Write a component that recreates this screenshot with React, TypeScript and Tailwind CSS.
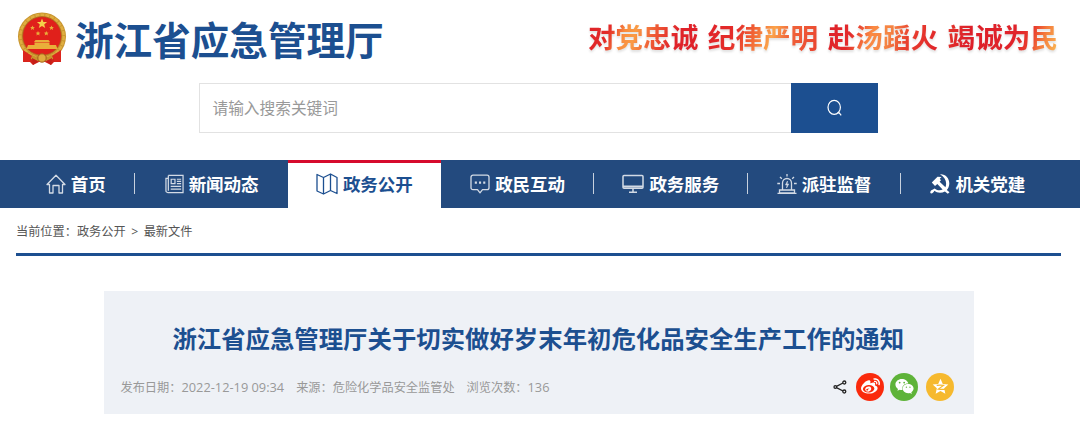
import React from "react";
import { FaWeibo, FaWeixin } from "react-icons/fa";

type IconProps = { className?: string };

function Emblem() {
  return (
    <svg viewBox="0 0 50 54" className="h-[54px] w-[50px] shrink-0">
      <path d="M7 38 L6 50 L13 50 L16 53 L22 50 L28 50 L34 53 L37 50 L44 50 L43 38Z" fill="#d3221a" />
      <circle cx="25" cy="24.500" r="24" fill="#c8952f" />
      <circle cx="25" cy="24.500" r="21.700" fill="none" stroke="#dfae40" strokeWidth="2.500" strokeDasharray="4 1" />
      <circle cx="25" cy="24" r="19.300" fill="#e0201b" stroke="#a9661b" strokeWidth="0.7" />
      <path d="M25 6.500l1.400 3.400 3.700.2-2.900 2.300 1 3.600-3.200-2-3.200 2 1-3.600-2.900-2.300 3.700-.2z" fill="#f4cf49" />
      <g fill="#e9ae3a">
        <path d="M15.500 13.500l.7 1.600 1.700.1-1.300 1.100.5 1.700-1.600-1-1.600 1 .5-1.700-1.300-1.100 1.700-.1z" />
        <path d="M34.500 13.500l.7 1.600 1.700.1-1.300 1.100.5 1.700-1.600-1-1.600 1 .5-1.700-1.300-1.100 1.700-.1z" />
        <path d="M21 19l.7 1.600 1.700.1-1.300 1.100.5 1.700-1.600-1-1.600 1 .5-1.700-1.300-1.100 1.700-.1z" />
        <path d="M29.300 19l.7 1.600 1.700.1-1.300 1.100.5 1.700-1.600-1-1.600 1 .5-1.700-1.300-1.100 1.700-.1z" />
        <path d="M18.500 28h13l1.500 2h-16zM17.500 30.500h15v2.500h-15zM11 33h28l1.500 4h-31z" />
      </g>
      <path d="M12 42q13 7 26 0l-2 5q-11 5-22 0z" fill="#c9942c" />
      <circle cx="25" cy="46" r="4.200" fill="#e0ac3f" stroke="#a4601b" strokeWidth="1" />
      <path d="M6 38l9 6-3 6-6-1zM44 38l-9 6 3 6 6-1z" fill="#dc251d" />
      <path d="M15 46l6 3-5 4zM35 46l-6 3 5 4z" fill="#c41f19" />
    </svg>
  );
}

function HomeIcon({ className }: IconProps) {
  return (
    <svg viewBox="0 0 20 20" className={className} fill="none" stroke="currentColor" strokeWidth="1.3" strokeLinejoin="round">
      <path d="M1 10.500L10 1.200l9 9.300h-2.500V19h-3.500v-7.500H7V19H3.500v-8.500z" />
    </svg>
  );
}

function NewsIcon({ className }: IconProps) {
  return (
    <svg viewBox="0 0 20 20" className={className} fill="none" stroke="currentColor" strokeWidth="1.3">
      <path d="M3.500 1H19v18H3c-1.400 0-2-1-2-2V4h2.500M3.500 1v16" />
      <path d="M6.500 5h4v4.500h-4zM12.500 5H17M12.500 7.200H17M12.500 9.500H17M6 12.500h11M6 15.500h11" />
    </svg>
  );
}

function MapIcon({ className }: IconProps) {
  return (
    <svg viewBox="0 0 22 22" className={className} fill="none" stroke="currentColor" strokeWidth="1.300" strokeLinejoin="round">
      <path d="M1 1.500l6.500 3L14.500 1 21 4.500V20.500l-6.500-3-7 3.500L1 18zM7.500 4.500V21M14.500 1v16.500" />
    </svg>
  );
}

function ChatIcon({ className }: IconProps) {
  return (
    <svg viewBox="0 0 20 20" className={className} fill="none" stroke="currentColor" strokeWidth="1.300" strokeLinejoin="round">
      <path d="M3 1.200h14a2 2 0 012 2v10.500a2 2 0 01-2 2h-4.500L10 18.800l-2.500-3.100H3a2 2 0 01-2-2V3.200a2 2 0 012-2z" />
      <path d="M4.800 8.700h2.100M9 8.700h2.100M13.200 8.700h2.100" strokeWidth="2.200" />
    </svg>
  );
}

function ScreenIcon({ className }: IconProps) {
  return (
    <svg viewBox="0 0 22 20" className={className} fill="none" stroke="currentColor" strokeWidth="1.500">
      <rect x="1" y="1.500" width="20" height="12.700" rx="1" />
      <path d="M1 12.500h20" strokeWidth="2" />
      <path d="M11 14.500v3.500M7 18.300h8" />
    </svg>
  );
}

function AlarmIcon({ className }: IconProps) {
  return (
    <svg viewBox="0 0 20 20" className={className} fill="none" stroke="currentColor" strokeWidth="1.300">
      <path d="M5.500 15.500V9a4.500 4.500 0 019 0v6.500M2.500 16h15v2.800h-15zM10 0v2.500M3 3l1.800 1.800M17 3l-1.800 1.800M.3 9.500h2.700M17 9.500h2.700M.5 19.300h19" />
      <path d="M10.500 7L8.500 11h1.700L9.500 14l2.200-4H10z" fill="currentColor" strokeWidth=".6" />
    </svg>
  );
}

function PartyIcon({ className }: IconProps) {
  return (
    <svg viewBox="0 0 20 20" className={className} fill="currentColor">
      <path d="M10 .3C15.500-.2 19.500 4.500 19.300 9.800c-.1 2.600-1 4.600-2.500 6.200l2.700 2.300-1.700 1.500-2.900-2.400C11.500 19.400 7 19 4.300 16.700c-.4 1.600-2.200 3.200-3.700 2.600-1-1.400.3-3.300 2.400-3.800l1.500-1.100c3 2.200 5.800 2.200 8.100 1L7.300 10 5 12 1.800 8.500 7.500 2.800 11.500 3 9.800 4.700l1.200 1.600-1.400 1.500 5.800 5.400C17.300 8.900 15.500 3.500 10 .3z" />
    </svg>
  );
}

function SearchIcon() {
  return (
    <svg viewBox="0 0 18 18" className="size-[18px] text-white" fill="none" stroke="currentColor" strokeWidth="1.200">
      <ellipse cx="8.200" cy="8.300" rx="6.200" ry="7" />
      <path d="M11.700 13.800h1.500l2 2.500" />
    </svg>
  );
}

function ShareIcon() {
  return (
    <svg viewBox="0 0 14 14" className="size-[14px] text-[#222]" fill="none" stroke="currentColor" strokeWidth="1.300">
      <path d="M3.500 6.300l6.500-3.300M3.500 7.700l6.500 3.300" />
      <circle cx="2.300" cy="7" r="1.300" />
      <circle cx="11.300" cy="2.500" r="1.500" />
      <circle cx="11.300" cy="11.500" r="1.500" />
    </svg>
  );
}

function QzoneIcon() {
  return (
    <svg viewBox="0 0 20 20" className="size-[17px]">
      <path d="M10 1l2.700 6 6.500.7-4.900 4.300 1.400 6.500-5.700-3.300-5.700 3.300 1.400-6.500L.8 7.700 7.300 7z" fill="#fff" />
      <path d="M5.500 8.700q4-.8 8 0L7.500 13q4 .8 9 .1" fill="none" stroke="#f6b92e" strokeWidth="1.500" />
    </svg>
  );
}

const slogans = [
  { text: "对党忠诚", fill: "bg-[linear-gradient(110deg,#dd2229_0%,#e32a28_21%,#f98d3e_34%,#fa9b45_43%,#ef5b35_58%,#e0232a_76%,#df2029_100%)]" },
  { text: "纪律严明", fill: "bg-[linear-gradient(110deg,#df2029_0%,#e52e2a_27%,#f26535_42%,#fba34a_57%,#f0643a_70%,#e9412f_100%)]" },
  { text: "赴汤蹈火", fill: "bg-[linear-gradient(110deg,#dd1f29_0%,#e42b2b_24%,#fa8a43_40%,#f58443_55%,#e9412f_70%,#df2029_100%)]" },
  { text: "竭诚为民", fill: "bg-[linear-gradient(110deg,#e43a2d_0%,#dd1f29_22%,#e0232a_60%,#e93d2e_73%,#f47c3c_83%,#fcc35a_100%)]" },
];

const navItems = [
  { label: "首页", Icon: HomeIcon, size: "w-[20px] h-[20px]" },
  { label: "新闻动态", Icon: NewsIcon, size: "w-[19px] h-[20px]" },
  { label: "政务公开", Icon: MapIcon, size: "w-[22px] h-[22px]", active: true },
  { label: "政民互动", Icon: ChatIcon, size: "w-[20px] h-[20px]" },
  { label: "政务服务", Icon: ScreenIcon, size: "w-[22px] h-[20px]" },
  { label: "派驻监督", Icon: AlarmIcon, size: "w-[20px] h-[20px]" },
  { label: "机关党建", Icon: PartyIcon, size: "w-[20px] h-[20px]" },
];

export default function App() {
  return (
    <div className="h-[433px] w-[1080px] overflow-hidden bg-white font-['Noto_Sans_CJK_SC',sans-serif]">
      <header className="flex h-[83px] justify-between pr-[22px] pl-[17px]">
        <div className="flex items-start pt-[12px]">
          <Emblem />
          <h1 className="mt-[-2px] ml-[8px] text-[38.600px] leading-[56px] font-bold whitespace-nowrap text-[#1c4f90]">浙江省应急管理厅</h1>
        </div>
        <div className="flex gap-[9.500px] pt-[15px] drop-shadow-[0_2px_1px_rgba(0,0,0,0.12)]">
          {slogans.map((s) => (
            <span key={s.text} className={`h-[42px] bg-clip-text text-[27.600px] leading-[42px] font-bold whitespace-nowrap text-transparent ${s.fill}`}>
              {s.text}
            </span>
          ))}
        </div>
      </header>

      <div className="ml-[199px] flex h-[50px] w-[679px]">
        <div className="flex flex-1 items-center border border-r-0 border-[#e2e2e2] pl-[12.500px] text-[15.700px] text-[#999]">请输入搜索关键词</div>
        <button className="flex w-[87px] items-center justify-center bg-[#1c4f90]">
          <SearchIcon />
        </button>
      </div>

      <nav className="mt-[26.500px] flex h-[48.500px] bg-[#234a7e] pl-[17px]">
        {navItems.map(({ label, Icon, size, active }, i) => (
          <div
            key={label}
            className={`flex items-center ${i === 0 ? "w-[117.500px]" : "w-[153.250px]"} ${active ? "border-t-3 border-[#d60b2d] bg-white text-[#1c4f90]" : "text-white"}`}
          >
            <div className={`flex flex-1 items-center justify-center gap-[5px] ${active ? "pb-[3px]" : "pl-[1px]"}`}>
              <Icon className={`${size} shrink-0 ${active || i === 6 ? "" : "opacity-80"}`} />
              <span className="text-[17.500px] leading-6 font-bold whitespace-nowrap">{label}</span>
            </div>
            {(i === 0 || (i > 2 && i < 6)) && <i className="h-[21px] w-px bg-white/75" />}
          </div>
        ))}
      </nav>

      <div className="mr-[19px] ml-[16px] h-[48px] border-b-3 border-[#1c4f90] pt-[13px] text-[12.200px] leading-[20px] whitespace-pre text-[#555]">
        当前位置：政务公开<span className="px-[5.500px] font-['Open_Sans',sans-serif]">&gt;</span>最新文件
      </div>

      <main className="mt-[35px] ml-[103.500px] h-[122.500px] w-[870.500px] bg-[#eef1f6] px-[17px] pt-[28px]">
        <h2 className="-ml-[1px] text-center text-[24.400px] leading-[38px] font-bold whitespace-nowrap text-[#1c4f90]">浙江省应急管理厅关于切实做好岁末年初危化品安全生产工作的通知</h2>
        <div className="mt-[15.500px] flex h-[28px] items-center justify-between">
          <div className="flex gap-[12px] text-[12.200px] leading-[18px] whitespace-nowrap text-[#999]">
            <span>发布日期：<span className="font-['Open_Sans',sans-serif] text-[12.800px]">2022-12-19 09:34</span></span>
            <span>来源：危险化学品安全监管处</span>
            <span>浏览次数：<span className="font-['Open_Sans',sans-serif] text-[12.800px]">136</span></span>
          </div>
          <div className="mr-[3px] flex items-center">
            <ShareIcon />
            <span className="ml-[9px] flex size-[28px] items-center justify-center rounded-full bg-[#fa2a0c] text-white"><FaWeibo size={19} /></span>
            <span className="ml-[6px] flex size-[28px] items-center justify-center rounded-full bg-[#5eb339] text-white"><FaWeixin size={19} /></span>
            <span className="ml-[8px] flex size-[28px] items-center justify-center rounded-full bg-[#f6b92e]"><QzoneIcon /></span>
          </div>
        </div>
      </main>
    </div>
  );
}
